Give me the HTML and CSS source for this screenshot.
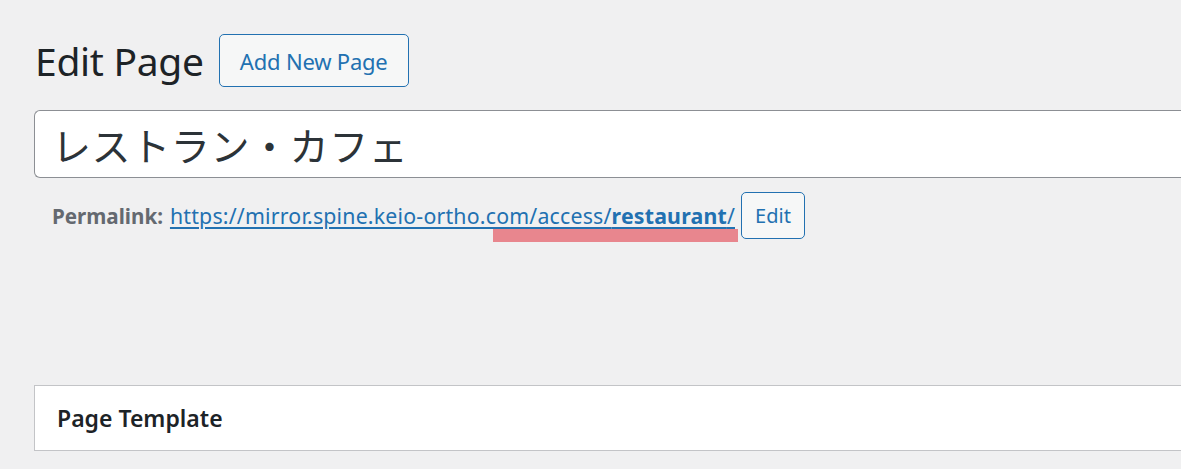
FILE: index.html
```html
<!DOCTYPE html>
<html lang="ja">
<head>
<meta charset="utf-8">
<link rel="stylesheet" href="styles.css">
</head>
<body>
<div class="wrap">
  <div class="heading-row">
    <h1 class="page-title">Edit Page</h1>
    <a class="btn-add" href="#">Add New Page</a>
  </div>
  <div class="title-box">レストラン・カフェ</div>
  <div class="permalink-row">
    <span class="perma-label">Permalink:</span>
    <span class="perma-link-wrap">
      <a class="perma-link" href="#">https://mirror.spine.keio-ortho.com/access/<b>restaurant</b>/</a>
      <span class="highlight"></span>
    </span>
    <button class="btn-edit">Edit</button>
  </div>
  <div class="blur-area"></div>
  <div class="metabox">
    <h2 class="metabox-title">Page Template</h2>
  </div>
</div>
</body>
</html>
```
FILE: styles.css
```css
html, body {
  margin: 0;
  padding: 0;
  background: #f0f0f1;
  font-family: "Noto Sans", "Noto Sans CJK JP", sans-serif;
  color: #1d2327;
  overflow: hidden;
}
.wrap {
  padding: 34px 0 0 34px;
}
.heading-row {
  display: flex;
  align-items: center;
  gap: 15px;
  height: 53px;
}
.page-title {
  margin: 0 0 0 1px;
  font-weight: 400;
  font-size: 39px;
  line-height: 1;
  color: #1d2327;
  letter-spacing: -0.3px;
}
.btn-add {
  box-sizing: border-box;
  height: 53px;
  width: 190px;
  display: flex;
  align-items: center;
  justify-content: center;
  border: 1px solid #2271b1;
  border-radius: 5px;
  background: #f6f7f7;
  color: #2271b1;
  text-decoration: none;
  font-size: 22px;
  letter-spacing: -0.2px;
}
.title-box {
  margin-top: 23px;
  box-sizing: border-box;
  height: 68px;
  background: #fff;
  border: 1px solid #8c8f94;
  border-right: none;
  border-radius: 6px 0 0 6px;
  padding: 0 0 0 17px;
  display: flex;
  align-items: center;
  font-family: "Noto Sans CJK JP", sans-serif;
  font-size: 39px;
  color: #2c3338;
  letter-spacing: 0.6px;
}
.permalink-row {
  display: flex;
  align-items: center;
  height: 47px;
  margin-top: 14px;
  padding-left: 18px;
  font-size: 20.6px;
}
.perma-label {
  font-weight: 700;
  color: #646970;
  margin-right: 7px;
}
.perma-link-wrap {
  position: relative;
  display: flex;
}
.perma-link {
  color: #2271b1;
  text-decoration: underline;
  text-underline-offset: 3px;
  text-decoration-thickness: 2px;
  font-size: 21.3px;
  letter-spacing: 0.2px;
}
.perma-link b {
  font-weight: 700;
}
.highlight {
  position: absolute;
  left: 323px;
  top: 28px;
  width: 245px;
  height: 13px;
  background: #e8868e;
}
.btn-edit {
  margin-left: 6px;
  box-sizing: border-box;
  width: 64px;
  height: 47px;
  border: 1px solid #2271b1;
  border-radius: 5px;
  background: #f6f7f7;
  color: #2271b1;
  font-family: "Noto Sans", sans-serif;
  font-size: 20px;
  padding: 0;
}
.blur-area {
  height: 146px;
}
.metabox {
  box-sizing: border-box;
  height: 66px;
  background: #fff;
  border: 1px solid #c3c4c7;
  border-right: none;
  display: flex;
  align-items: center;
  padding-left: 22px;
}
.metabox-title {
  margin: 0;
  font-size: 23px;
  font-weight: 600;
  color: #1d2327;
}
```
